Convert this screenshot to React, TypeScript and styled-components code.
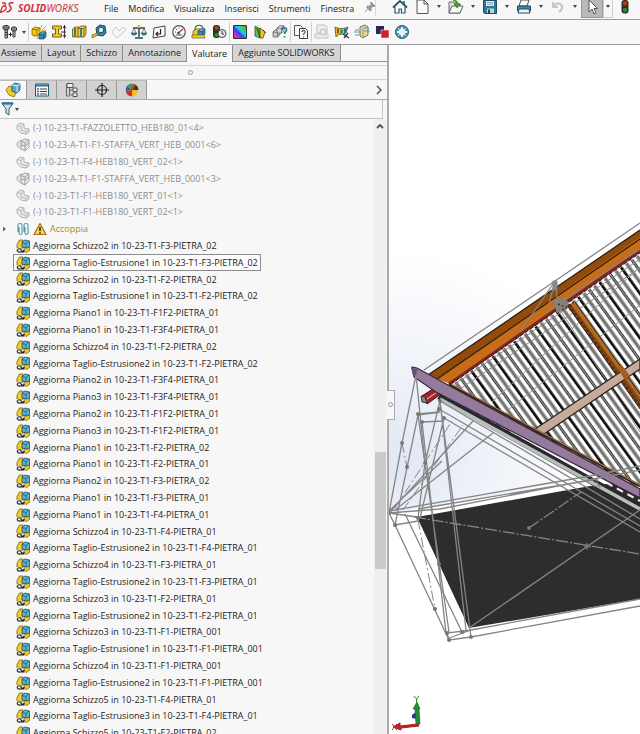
import React from 'react';
import styled, { createGlobalStyle, css } from 'styled-components';

const GlobalStyle = createGlobalStyle`
  * { box-sizing: border-box; }
  body { margin: 0; background: #fff; font-family: "Open Sans", "Noto Sans", sans-serif; color: #222; }
  button { font: inherit; color: inherit; border: 0; padding: 0; margin: 0; background: none; }
`;

const Window = styled.div`
  height: 100vh;
  display: flex;
  flex-direction: column;
  overflow: hidden;
`;

const TitleBar = styled.header`
  flex: 0 0 20px;
  display: flex;
  align-items: flex-start;
  background: #f7f7f7;
  border-bottom: 1px solid #9a9a9a;
`;

const Logo = styled.div`
  display: flex;
  align-items: center;
  width: 98px;
  height: 15px;
  font: italic 10px/14px "Noto Sans", "Open Sans", sans-serif;
  color: #d0343a;
  svg { flex: none; margin-right: 4px; }
`;

const Menu = styled.nav`
  display: flex;
  align-items: center;
  width: 278px;
  height: 16px;
  gap: 10px;
  padding-left: 6px;
  font-size: 9px;
  border-right: 1px solid #d8d8d8;
`;

const QuickAccess = styled.div`
  display: flex;
  align-items: flex-start;
  padding-left: 13px;
`;

const Tool = styled.button<{ $pressed?: boolean; $quick?: boolean }>`
  flex: none;
  display: flex;
  align-items: center;
  justify-content: center;
  width: ${p => (p.$quick ? 22 : 20)}px;
  height: ${p => (p.$quick ? 18 : 20)}px;
  padding-bottom: ${p => (p.$quick ? 4 : 0)}px;
  ${p => p.$pressed && css`background: #b9b9b9; border: 1px solid #999; border-top: 0;`}
`;

const CaretButton = styled.button<{ $boxed?: boolean }>`
  flex: none;
  display: flex;
  align-items: center;
  justify-content: center;
  width: ${p => (p.$boxed ? 10 : 12)}px;
  height: 18px;
  padding-bottom: 5px;
  ${p => p.$boxed && css`border: 1px solid #ccc; border-top: 0; margin-right: 1px;`}
`;

const Triangle = styled.span`
  border: 2px solid transparent;
  border-top: 3px solid #444;
  border-bottom: 0;
`;

const ToolBar = styled.div`
  flex: 0 0 25px;
  display: flex;
  align-items: center;
  background: #f7f7f7;
  border-bottom: 1px solid #9a9a9a;
`;

const ToolCaret = styled.button`
  width: 8px;
  height: 20px;
  display: flex;
  align-items: center;
  justify-content: center;
`;

const Divider = styled.span`
  flex: 0 0 1px;
  height: 20px;
  background: #d0d0d0;
`;

const Workspace = styled.main`
  flex: 1;
  min-height: 0;
  display: flex;
`;

const Panel = styled.section`
  position: relative;
  flex: 0 0 389px;
  display: flex;
  flex-direction: column;
  background: #f7f7f7;
  border-right: 2px solid #aaa;
`;

const CommandTabs = styled.div`
  flex: 0 0 17px;
  display: flex;
  border-bottom: 1px solid #8b9499;
`;

const CommandTab = styled.button<{ $active?: boolean }>`
  padding: 0 5px;
  font-size: 9px;
  line-height: 16px;
  white-space: nowrap;
  color: #222;
  background: #d5d5d5;
  border-right: 1px solid #8f8f8f;
  &:first-child { padding-left: 1px; }
  ${p => p.$active && css`background: #f7f7f7; margin-bottom: -1px;`}
`;

const GripBar = styled.div`
  flex: 0 0 15px;
  margin-top: 3px;
  display: flex;
  align-items: center;
  justify-content: center;
  padding-right: 6px;
  border: solid #d0d5d6;
  border-width: 1px 0;
`;

const Grip = styled.span`
  width: 5px;
  height: 5px;
  border: 1px solid #999;
  border-radius: 50%;
`;

const ManagerTabs = styled.div`
  flex: 0 0 20px;
  display: flex;
  border-bottom: 1px solid #aaa;
`;

const ManagerTab = styled.button<{ $active?: boolean }>`
  flex: 0 0 ${p => (p.$active ? 27 : 30)}px;
  display: flex;
  align-items: center;
  justify-content: center;
  background: ${p => (p.$active ? '#f7f7f7' : '#d2d2d2')};
  border-right: 1px solid #999;
  border-top: 1px solid #bbb;
`;

const MoreButton = styled.button`
  width: 16px;
  margin-left: auto;
  display: flex;
  align-items: center;
  justify-content: center;
`;

const FilterBar = styled.div`
  flex: 0 0 19px;
  display: flex;
  align-items: center;
  margin-right: 4px;
  border: solid #c4c4c4;
  border-width: 0 1px 1px 0;
`;

const FilterButton = styled.button`
  display: flex;
  align-items: center;
  gap: 1px;
  padding-left: 1px;
`;

const TreeArea = styled.div`
  flex: 1;
  min-height: 0;
  display: flex;
`;

const Tree = styled.ul`
  flex: 1;
  margin: 0;
  padding: 0;
  list-style: none;
  overflow: hidden;
`;

const TreeRow = styled.li<{ $tone?: 'muted' | 'mate' }>`
  display: flex;
  align-items: center;
  height: 17px;
  padding-left: 2px;
  font-size: 9px;
  line-height: 15px;
  white-space: nowrap;
  color: ${p => (p.$tone === 'muted' ? '#8d8d8d' : p.$tone === 'mate' ? '#94941e' : '#1c1c1c')};
  &:nth-child(5n) { height: 16px; }
`;

const Expander = styled.span`
  width: 11px;
  display: flex;
`;

const RowLabel = styled.span<{ $selected?: boolean }>`
  display: flex;
  align-items: center;
  gap: 3px;
  height: 100%;
  padding: 0 2px;
  border: 1px solid ${p => (p.$selected ? '#8c8c8c' : 'transparent')};
  background: ${p => (p.$selected ? '#fcfcfc' : 'transparent')};
`;

const ScrollBar = styled.div`
  flex: 0 0 12px;
  display: flex;
  flex-direction: column;
  align-items: center;
  background: #efefef;
  margin-right: 1px;
`;

const ScrollGap = styled.div<{ $share: number }>`
  flex: ${p => p.$share} 1 0;
`;

const Thumb = styled.div`
  flex: 117 1 0;
  width: 11px;
  background: #cbcbcb;
`;

const PanelHandle = styled.button`
  position: absolute;
  left: 100%;
  top: 50%;
  width: 8px;
  height: 30px;
  display: flex;
  align-items: center;
  justify-content: center;
  background: #f7f7f7;
  border: 1px solid #aaa;
  border-left: 0;
`;

const Viewport = styled.section`
  flex: 1;
  min-width: 0;
  svg { display: block; width: 100%; height: 100%; }
`;

/* ---------- icons ---------- */

const Svg = ({ children, w = 16, h = 16 }: { children: React.ReactNode; w?: number; h?: number }) => (
  <svg width={w} height={h} viewBox={`0 0 ${w} ${h}`} fill="none" strokeLinejoin="round" aria-hidden="true">
    {children}
  </svg>
);

const Cube = ({ x, y, s = 8, fill = '#f2c618', top = '#fbe670', line = '#3b3414' }: { x: number; y: number; s?: number; fill?: string; top?: string; line?: string }) => (
  <g stroke={line} strokeWidth=".7">
    <path d={`M${x} ${y + s * 0.3}l${s * 0.35} ${-s * 0.3}h${s * 0.65}v${s * 0.7}l${-s * 0.35} ${s * 0.3}h${-s * 0.65}z`} fill={fill} />
    <path d={`M${x} ${y + s * 0.3}l${s * 0.35} ${-s * 0.3}h${s * 0.65}l${-s * 0.35} ${s * 0.3}zM${x + s * 0.65} ${y + s * 0.3}v${s * 0.7}`} fill={top} />
  </g>
);

const IconLogo = () => (
  <Svg w={14} h={14}>
    <path d="M2 2h2.500c2 .5 1 2.500-1.500 3M0 11.500c4-.5 7-3.500 6-5.500C5.500 5 4 5 2.500 5.500L0 12" stroke="#d0343a" strokeWidth="1.300" />
    <path d="M13.500 2c-3-1-5 .3-4 2.300s2.500 2.500 1.300 4.200S7.500 11 6.500 10.500" stroke="#d0343a" strokeWidth="1.600" />
  </Svg>
);
const IconPin = () => (
  <Svg w={12} h={12}><path d="M7 1l4 4-1 .5-1-.3-2 2 .2 2-1 .8L2.500 6l.8-1 2 .2 2-2L6.500 2zM4 8l-3 3" fill="#999" stroke="#888" strokeWidth=".8" /></Svg>
);
const IconHome = () => (
  <Svg><path d="M3 8v6h4v-4h2.500v4H13V8" fill="#fff" stroke="#25566b" strokeWidth="1.200" /><path d="M1 8.500L8 2l7 6.500" stroke="#25566b" strokeWidth="1.800" /><path d="M12 2v3" stroke="#25566b" strokeWidth="1.500" /></Svg>
);
const IconNew = () => (
  <Svg><path d="M3 1h7l4 4v9.500H3z" fill="#fafafa" stroke="#555" /><path d="M10 1v4h4" stroke="#555" /></Svg>
);
const IconOpen = () => (
  <Svg><path d="M1 3h5l1 2h5v9H1z" fill="#e2e2dc" stroke="#666" /><path d="M4 7h11l-3 7H1z" fill="#f7f7f3" stroke="#666" /><path d="M5 1c3 0 5 1 5 4h2.500L9 9 6 5h2c0-2-1-3-3-4z" fill="#43a324" stroke="#2a7016" strokeWidth=".5" /></Svg>
);
const IconSave = () => (
  <Svg><path d="M1.500 1.500h13v13h-12l-1-1z" fill="#2f7897" stroke="#1c4c63" /><path d="M4 2h8v5H4z" fill="#dfe8eb" /><path d="M5 3.500h6M5 5.300h6" stroke="#76909a" strokeWidth=".7" /><path d="M5 9.500h7V14H5z" fill="#c7d5db" /><path d="M6 10.500h2V14H6z" fill="#204d60" /></Svg>
);
const IconPrint = () => (
  <Svg><path d="M5 1h8l-2 6H3z" fill="#fafafa" stroke="#555" /><path d="M1.500 7h13v5h-13z" fill="#3d88a8" stroke="#1c4c63" /><path d="M3 10h10l1 4H2z" fill="#eef3f5" stroke="#1c4c63" /></Svg>
);
const IconUndo = () => (
  <Svg><path d="M3 3v5h5M3.500 7.500C6 3 13 4 12 9c-.3 2-1.500 3-3 4" stroke="#c4c4c4" strokeWidth="2" /></Svg>
);
const IconCursor = () => (
  <Svg><path d="M5 1v12l3-3 2 5 2-1-2-4.500h3.500z" fill="#fff" stroke="#555" /></Svg>
);
const IconSignal = () => (
  <Svg><rect x="4.500" y="1" width="7" height="13.500" rx="3" fill="#27321f" /><circle cx="8" cy="4.500" r="2.200" fill="#c6301d" /><circle cx="8" cy="11" r="2.200" fill="#2d8c31" /></Svg>
);

const IconBolts = () => (
  <Svg><path d="M1 2.500l1.500-1h3l1.500 1v2L5.500 6h-3L1 4.500z" fill="#777" stroke="#333" /><path d="M3 6h2.500v8H3z" fill="#bbb" stroke="#333" strokeWidth=".9" /><path d="M3 8.500h2.500M3 11h2.500" stroke="#333" /><path d="M9.500 4l1-1h3l1 1v2l-1 1h-3l-1-1z" fill="#888" stroke="#333" /><path d="M11 7h2v6h-2z" fill="#bbb" stroke="#333" strokeWidth=".9" /><path d="M6.500 10.500h4M8.500 8.500v4" stroke="#222" /></Svg>
);
const IconInterference = () => (
  <Svg><path d="M1 5l3-2 5 1v6l-3 2-5-1z" fill="#f2c618" stroke="#6a5614" strokeWidth=".7" /><path d="M1 5l5 1v6M6 6l3-2" stroke="#6a5614" strokeWidth=".7" /><Cube x={8} y={8} s={7} fill="#2e86ad" top="#79bad3" line="#17455b" /><path d="M9 6l2-5M11 6l4-4M3 13l3-2M6 15l1-3M11 7l4-1" stroke="#e0a41d" /></Svg>
);
const IconClearance = () => (
  <Svg><path d="M1.500 2h9v3h-3v5h3v3h-9v-3h3V5h-3z" fill="#f4cc24" stroke="#5c4f14" strokeWidth=".9" /><path d="M13.500 1v13M12 4l1.500-2L15 4M12 11l1.500 2 1.500-2M10 8h5" stroke="#333" /></Svg>
);
const IconHoles = () => (
  <Svg><path d="M1.500 5L4 3h4v10H1.500z" fill="#f2c618" stroke="#6a5614" strokeWidth=".8" /><path d="M7 4l3-2h5v8l-2 3H7z" fill="#f4cf30" stroke="#6a5614" strokeWidth=".8" /><path d="M7 4.500h6L15 2M13 4.500V13" stroke="#6a5614" strokeWidth=".8" /><path d="M4 4v9M10 4v9" stroke="#2b7795" strokeWidth="1.800" /></Svg>
);
const IconMeasure = () => (
  <Svg><path d="M5 4l4-3 5 1 1 7-3 3-6-1z" fill="#3488aa" stroke="#1b4a60" /><circle cx="10" cy="6" r="2.800" fill="#d9ebf1" stroke="#1b4a60" /><path d="M7 11l-6 3V11l6-2z" fill="#f2c618" stroke="#5e5212" strokeWidth=".7" /></Svg>
);
const IconMarkup = () => (
  <Svg><path d="M2 6l3-3 3 4 4-4 3 3-9 8-4-4z" fill="#f6f6f6" stroke="#c9c9c9" /></Svg>
);
const IconScale = () => (
  <Svg><path d="M8 1v12M4 14h8M2 4h12" stroke="#29495a" strokeWidth="1.500" /><path d="M3 4L1 9M3 4l2 5M13 4l-2 5M13 4l2 5" stroke="#555" strokeWidth=".7" /><path d="M0 9h6c-1 3-5 3-6 0zM10 9h6c-1 3-5 3-6 0z" fill="#2e86ad" stroke="#1c4c63" strokeWidth=".6" /><circle cx="8" cy="2.500" r="1.500" fill="#f2c618" /></Svg>
);
const IconSection = () => (
  <Svg><path d="M3 4l11-2v10L2 14z" fill="#fafafa" stroke="#444" /><path d="M9.500 5v5H5M7 8l-2 2 2 2" stroke="#222" strokeWidth="1.200" /></Svg>
);
const IconGauge = () => (
  <Svg><circle cx="8" cy="8" r="6.300" fill="#f8f8f8" stroke="#555" strokeWidth="1.200" /><path d="M7 9l5-4" stroke="#d4352b" strokeWidth="1.500" /><path d="M4 8h1M5 5l1 1M8 3.500v1M5 11h6" stroke="#555" /><circle cx="7.500" cy="9" r="1.300" fill="#444" /></Svg>
);
const IconSensor = () => (
  <Svg><path d="M4 7V5c0-5 8-5 8 0" stroke="#555" strokeWidth="1.200" /><path d="M2 7l3-2h4v8H2z" fill="#f2c618" stroke="#6a5614" strokeWidth=".7" /><Cube x={7} y={5} s={7} fill="#3488aa" top="#8cc6dc" line="#1b4a60" /><path d="M1 11h12l1 3H1z" fill="#f4cc24" stroke="#6a5614" strokeWidth=".7" /></Svg>
);
const IconSignalClock = () => (
  <Svg><rect x="2" y="1" width="7" height="13" rx="3" fill="#27321f" /><circle cx="5.500" cy="4" r="2" fill="#d2331f" /><circle cx="5.500" cy="11" r="2" fill="#2d8c31" /><circle cx="11" cy="9.500" r="4" fill="#e9edef" stroke="#444" /><path d="M11 7v3h2" stroke="#333" /></Svg>
);
const IconGradient = () => (
  <Svg>
    <defs><linearGradient id="spectrum" x1="0" y1="1" x2="1" y2="0"><stop offset="0" stopColor="#e32b2b" /><stop offset=".2" stopColor="#d432d8" /><stop offset=".42" stopColor="#3440e6" /><stop offset=".58" stopColor="#25c9e8" /><stop offset=".76" stopColor="#2bd64a" /><stop offset="1" stopColor="#f03434" /></linearGradient></defs>
    <path d="M1.500 1.500h13v13h-13z" fill="url(#spectrum)" stroke="#333" />
  </Svg>
);
const IconDraft = () => (
  <Svg><path d="M3 2l5 3v9l-5-2z" fill="#65b548" stroke="#2a5b22" strokeWidth=".8" /><path d="M8 4l5 4-2 6H8z" fill="#f2c618" stroke="#514315" strokeWidth=".8" /><path d="M5 4l3 9M11 6l3 3" stroke="#244" /></Svg>
);
const IconSymmetry = () => (
  <Svg><Cube x={1} y={6} s={7} fill="#c6c6c6" top="#eee" line="#555" /><Cube x={5} y={2} s={7} fill="#d7d7d7" top="#f3f3f3" line="#555" /><path d="M10 6c0-3 5-3 4.500 0 0 2-2 1.500-2 4M12.500 12v1.500" stroke="#2a7694" strokeWidth="1.700" /></Svg>
);
const IconCompareDocs = () => (
  <Svg><path d="M1.500 1.500h6l2 2v8h-8z" fill="#fafafa" stroke="#555" /><path d="M6.500 4.500h6l2 2v8h-8z" fill="#fafafa" stroke="#444" /><path d="M9 8c0-2 3.500-2 3 0 0 1.500-1.500 1-1.500 3M10.500 12.500v1" stroke="#2a7694" strokeWidth="1.300" /></Svg>
);
const IconDisabledReport = () => (
  <Svg><path d="M3 1h8l2 2v6H3zM1 10h13v4H1z" fill="#ededed" stroke="#c2c2c2" /><circle cx="9" cy="8" r="3" fill="#e8e8e8" stroke="#bbb" /></Svg>
);
const IconSimulation = () => (
  <Svg><path d="M1 3c4 2 8 2 13 0l-2 6c-3 2-7 0-10 4z" fill="#e6c125" stroke="#4b3c18" strokeWidth=".7" /><path d="M3 4l2 1v4l-2 1z" fill="#d6352a" /><path d="M6 6l3-1v4l-3 1z" fill="#39a14a" /><path d="M10 5l3-1-1 5-2 1z" fill="#2c67c2" /><path d="M9 10l6 4M14 9l-4 5" stroke="#333" strokeWidth="1.300" /></Svg>
);
const IconFlow = () => (
  <Svg><path d="M6 3l5-2 3 2v8l-5 3-3-2z" fill="#e5d6a4" stroke="#5e7f58" /><path d="M1 6h4M0 8h6M1 11h4M10 4h5M10 7h6" stroke="#579bb5" /><path d="M9 4v9" stroke="#b98f3a" /></Svg>
);
const IconSquares = () => (
  <Svg><path d="M2 2h8v8H2z" fill="#27265e" /><path d="M7 6h8v8H7z" fill="#cf202c" stroke="#fff" strokeWidth=".5" /></Svg>
);
const IconTarget = () => (
  <Svg><circle cx="8" cy="8" r="6.500" fill="#3f8fb3" stroke="#245a73" /><path d="M8 2l2 4 4 2-4 2-2 4-2-4-4-2 4-2z" fill="#f4fafc" /><path d="M4 4l2 2M12 4l-2 2M4 12l2-2M12 12l-2-2" stroke="#dcecf2" /><circle cx="8" cy="8" r="1.500" fill="#dcecf2" /></Svg>
);

const IconAssembly = () => (
  <Svg><path d="M1 8l3-4 3 1v4l4 2-2 4-5-2z" fill="#f4cb23" stroke="#7a6415" strokeWidth=".8" /><path d="M7 3l3-2 5 1v6l-3 3-5-2z" fill="#56a9c8" stroke="#1f5870" strokeWidth=".8" /><path d="M7 3l5 1 3-2M12 4v6" stroke="#d6eef5" /></Svg>
);
const IconProperties = () => (
  <Svg><path d="M1.500 2h13v12h-13z" fill="#fafafa" stroke="#1f5870" /><path d="M2 2.500h12v2H2z" fill="#2e7795" /><path d="M3 7h2M3 9.500h2M3 12h2" stroke="#2b6cae" strokeWidth="1.500" /><path d="M6 7h7M6 9.500h7M6 12h7" stroke="#444" /></Svg>
);
const IconConfigurations = () => (
  <Svg><path d="M3 1.500h6v4H3zM9 6h4v3.500H9zM9 11h4v3.500H9z" fill="#eee" stroke="#555" /><path d="M5.500 6v7H9M5.500 8H9M2.500 2v12h3" stroke="#666" /></Svg>
);
const IconCrosshair = () => (
  <Svg><circle cx="8" cy="8" r="4.500" stroke="#222" strokeWidth="1.200" /><path d="M8 1v14M1 8h14" stroke="#222" strokeWidth="1.200" /></Svg>
);
const IconAppearance = () => (
  <Svg><circle cx="8" cy="8" r="6.500" fill="#e9e9e9" /><path d="M8 8L3 3.800A6.500 6.500 0 0 1 10 2z" fill="#4a9a4c" /><path d="M8 8L1.700 9A6.500 6.500 0 0 1 3 3.800z" fill="#2d62a8" /><path d="M8 8l-6.300 1A6.500 6.500 0 0 0 8 14.500z" fill="#d52e26" /><path d="M8 8v6.500A6.500 6.500 0 0 0 14.500 8z" fill="#f0c21d" /><path d="M8 8h6.500A6.500 6.500 0 0 0 10 2z" fill="#353535" /><path d="M8 8l3-5.500" stroke="#d52e26" strokeWidth="2" /></Svg>
);
const IconFunnel = () => (
  <Svg w={13}><path d="M.8 2h11.400L8 8v6l-3-2V8z" fill="#cfdfe5" stroke="#2d6479" /><path d="M1 2.500h11" stroke="#2d7590" strokeWidth="2.200" /></Svg>
);
const IconChevron = () => (<Svg w={8} h={10}><path d="M2 1l4 4-4 4" stroke="#555" strokeWidth="1.600" /></Svg>);
const IconUp = () => (<Svg w={8} h={14}><path d="M1 9l3-3 3 3" stroke="#555" strokeWidth="1.800" /></Svg>);

const IconGhostPart = () => (
  <Svg w={14} h={14}><path d="M1 4.500L4 2l4 1v4l5 1v3l-3 2-5-1-4-4z" fill="#ebebeb" stroke="#aaa" strokeWidth=".9" /><path d="M1 4.500l4 1L8 3M5 5.500V9l5 1.500L13 8M10 10.500V13" stroke="#b0b0b0" strokeWidth=".9" /></Svg>
);
const IconGhostAssembly = () => (
  <Svg w={14} h={14}><path d="M1 5l4-3 3 1v7l-3 1-4-3z" fill="#e5e5e5" stroke="#aaa" strokeWidth=".9" /><path d="M5 3l4-2 4 1v7l-4 4-4-2z" fill="#e8e8e8" stroke="#999" strokeWidth=".9" /><path d="M5 3.500l4 1.500 4-3M9 5v8M5 7l4 1 4-3" stroke="#999" strokeWidth=".9" /></Svg>
);
const IconUpdate = () => (
  <Svg w={14} h={14}>
    <path d="M1 5.500L3.500 1H7v8l-4 1-2-1z" fill="#f3ce20" stroke="#6f5c12" strokeWidth=".8" />
    <path d="M8 8h5.500v3.500l-3 2L8 12z" fill="#f0c51d" stroke="#6f5c12" strokeWidth=".7" />
    <path d="M6 3l3-2 4.500 1v6l-3 1L6 8z" fill="#62b0cf" stroke="#1f5267" strokeWidth=".8" />
    <path d="M6 3.500l4 1 3-2.500M10 4.500V9" stroke="#235b73" strokeWidth=".8" />
    <path d="M1 11.500C2 9 5 9.500 5 11s3 1.500 3.500 0M8.500 13H4.500C2.500 13.500 1.500 12.500 1 11.500" stroke="#f5f5f5" strokeWidth="2.200" />
    <path d="M1 11.500C2 9 5 9.500 5 11s3 1.500 3.500 0M8.500 13H4.500C2.500 13.500 1.500 12.500 1 11.500" stroke="#222" strokeWidth="1.200" />
  </Svg>
);
const IconMates = () => (
  <Svg w={14} h={14}><path d="M2 10V3c0-2 4-2 4 0v8c0 2-3 2-3 0V5M8 10V3c0-2 4-2 4 0v8c0 2-3 2-3 0V5" stroke="#4f9aa5" strokeWidth="1.100" /></Svg>
);
const IconWarning = () => (
  <Svg w={14} h={14}><path d="M7 1.500l6 11H1z" fill="#fbd544" stroke="#a3711d" strokeWidth="1.200" /><path d="M7 5v4M7 10.300v1.400" stroke="#222" strokeWidth="1.600" /></Svg>
);
const IconExpand = () => (<Svg w={6} h={8}><path d="M1 1.500L4 4 1 6.500z" fill="#666" /></Svg>);

/* ---------- data ---------- */

const parts = [
  { name: '(-) 10-23-T1-FAZZOLETTO_HEB180_01<4>' },
  { name: '(-) 10-23-A-T1-F1-STAFFA_VERT_HEB_0001<6>', assembly: true },
  { name: '(-) 10-23-T1-F4-HEB180_VERT_02<1>' },
  { name: '(-) 10-23-A-T1-F1-STAFFA_VERT_HEB_0001<3>', assembly: true },
  { name: '(-) 10-23-T1-F1-HEB180_VERT_01<1>' },
  { name: '(-) 10-23-T1-F1-HEB180_VERT_02<1>' },
];

const updates: [string, string][] = [
  ['Schizzo2', 'F3-PIETRA_02'], ['Taglio-Estrusione1', 'F3-PIETRA_02'],
  ['Schizzo2', 'F2-PIETRA_02'], ['Taglio-Estrusione1', 'F2-PIETRA_02'],
  ['Piano1', 'F1F2-PIETRA_01'], ['Piano1', 'F3F4-PIETRA_01'],
  ['Schizzo4', 'F2-PIETRA_02'], ['Taglio-Estrusione2', 'F2-PIETRA_02'],
  ['Piano2', 'F3F4-PIETRA_01'], ['Piano3', 'F3F4-PIETRA_01'],
  ['Piano2', 'F1F2-PIETRA_01'], ['Piano3', 'F1F2-PIETRA_01'],
  ['Piano1', 'F2-PIETRA_02'], ['Piano1', 'F2-PIETRA_01'],
  ['Piano2', 'F3-PIETRA_02'], ['Piano1', 'F3-PIETRA_01'], ['Piano1', 'F4-PIETRA_01'],
  ['Schizzo4', 'F4-PIETRA_01'], ['Taglio-Estrusione2', 'F4-PIETRA_01'],
  ['Schizzo4', 'F3-PIETRA_01'], ['Taglio-Estrusione2', 'F3-PIETRA_01'],
  ['Schizzo3', 'F2-PIETRA_01'], ['Taglio-Estrusione2', 'F2-PIETRA_01'],
  ['Schizzo3', 'F1-PIETRA_001'], ['Taglio-Estrusione1', 'F1-PIETRA_001'],
  ['Schizzo4', 'F1-PIETRA_001'], ['Taglio-Estrusione2', 'F1-PIETRA_001'],
  ['Schizzo5', 'F4-PIETRA_01'], ['Taglio-Estrusione3', 'F4-PIETRA_01'],
  ['Schizzo5', 'F2-PIETRA_02'],
];

const toolGroups: [string, React.FC][][] = [
  [['Interferenza', IconInterference], ['Distanza', IconClearance], ['Allineamento fori', IconHoles], ['Misura', IconMeasure], ['Marcatura', IconMarkup],
    ['Proprietà di massa', IconScale], ['Proprietà sezione', IconSection], ['Prestazioni', IconGauge], ['Sensore', IconSensor], ['Visualizzazione assieme', IconSignalClock]],
  [['Curvatura', IconGradient], ['Sformo', IconDraft], ['Simmetria', IconSymmetry]],
  [['Confronta documenti', IconCompareDocs]],
  [['Rapporto', IconDisabledReport], ['Simulazione', IconSimulation], ['Flusso', IconFlow], ['Confronto', IconSquares], ['Verifica', IconTarget]],
];

const quickTools: [string, React.FC][] = [['Nuovo', IconNew], ['Apri', IconOpen], ['Salva', IconSave], ['Stampa', IconPrint], ['Annulla', IconUndo]];

const managerTabs: [string, React.FC][] = [['Albero', IconAssembly], ['Proprietà', IconProperties], ['Configurazioni', IconConfigurations], ['Quote', IconCrosshair], ['Aspetti', IconAppearance]];

/* ---------- 3D view ---------- */

const joints = [[402, 443], [407, 467], [418, 414], [422, 422], [440, 401], [439, 409], [444, 418], [425, 463], [389, 513], [395, 525], [418, 518], [435, 609], [439, 564], [449, 640], [447, 633], [462, 632], [471, 637], [529, 528], [587, 546]];

const Model = () => (
  <svg viewBox="389 45 251 689" preserveAspectRatio="xMinYMin slice" role="img" aria-label="Modello 3D">
    <defs>
      <radialGradient id="sky" gradientUnits="userSpaceOnUse" cx="400" cy="460" r="210">
        <stop offset="0" stopColor="#e1e7f4" /><stop offset=".45" stopColor="#f0f3f9" /><stop offset="1" stopColor="#fff" />
      </radialGradient>
      <pattern id="slatBands" width="40" height="26" patternUnits="userSpaceOnUse" patternTransform="rotate(54.300)">
        <path d="M0 0h40v26H0z" fill="#fff" />
        <path d="M0 2.500h40M0 9h40M0 22h40" stroke="#90968f" strokeWidth="1.600" />
        <path d="M0 1.500h40M0 3.500h40M0 8h40M0 10h40M0 21h40M0 23h40" stroke="#171816" strokeWidth=".8" />
        <path d="M0 15.700h40" stroke="#0d0e0d" strokeWidth="2.800" />
      </pattern>
    </defs>
    <path d="M389 45h251v689H389z" fill="#fff" />
    <path d="M389 240h251v273H389z" fill="url(#sky)" />
    <path d="M389 513L440 505 640 470v264H389z" fill="#fff" />

    <path d="M417 517L590 486 640 480v119L469 628z" fill="#2d2d2d" />

    <path d="M450 386L640 254V498L535 434z" fill="url(#slatBands)" />
    <path d="M455 384L640 259M460 389L640 268" stroke="#858585" strokeWidth="1" />
    <path d="M640 267L492 402M640 305L508 410M560 310l80 122" stroke="#919191" strokeWidth="1" />

    <path d="M567 305l8-3 65 92v15z" fill="#804713" />
    <path d="M571 304l4-2 65 92v5z" fill="#b66b25" />
    <path d="M567 305l73 104M575 302l65 92" stroke="#352215" strokeWidth="1" />
    <path d="M569 305l71 101" stroke="#4c2c20" strokeWidth="2" strokeDasharray="3 2" />
    <path d="M532 431L640 359v10L544 434z" fill="#c6aa9b" stroke="#30221d" strokeWidth="1.300" />
    <path d="M617 368l8 12 5-4-9-12z" fill="#a0601f" />

    <path d="M428 375L640 230v8L437 379z" fill="#914b0b" />
    <path d="M437 379L640 237v15L451 384z" fill="#c76c17" />
    <path d="M428 375L640 230M437 379L640 239" stroke="#2c1909" strokeWidth="1.200" />
    <path d="M449 384L640 251" stroke="#7d2425" strokeWidth="3" />
    <path d="M451 384L640 253" stroke="#2c1919" strokeWidth="1" strokeDasharray="4 2" />

    <path d="M422 396l14-9 9 4-18 13z" fill="#a8222c" stroke="#311" />
    <path d="M427 399l13-9" stroke="#e8d5d5" strokeWidth="1" />
    <path d="M421 396l4 1 2 6-5-1z" fill="#888" stroke="#333" />
    <path d="M439 396L640 508" stroke="#28292a" strokeWidth="7" />
    <path d="M440 399L640 509" stroke="#b9bdbc" strokeWidth="3.500" />
    <path d="M448 397L640 501" stroke="#f0f0f0" strokeWidth="2" strokeDasharray="7 5" />
    <path d="M412 367l5 1 31 17L640 489v9L436 392l-22-15z" fill="#947b9b" stroke="#37263e" strokeWidth="1.200" />
    <path d="M449 384L640 486" stroke="#3a2720" strokeWidth="3" />
    <path d="M451 384L640 485" stroke="#ba8954" strokeWidth="1" />
    <path d="M411 368l6 1-1 7-3-1z" fill="#624f72" />

    <g fill="none" stroke="#858585" strokeWidth="1.300">
      <path d="M424 370L555 281 640 223M555 281l-6 23M555 281l3 25M555 281L520 332M640 249l-95 63" />
      <path d="M416 375L402 443 389 513 395 525 449 640 471 637 640 606M416 375L425 463M395 525l23-110 22-3" />
      <path d="M418 414l21-2M422 422l22-1M418 415l31 217M422 422l24 211M440 401l31 236M440 401l26 229M440 401L425 463 418 518M444 418L420 518" />
      <path d="M395 525l23-4M389 513l51-4 200-39M418 509l180-30M389 511L590 476 640 466M389 513l28 4M462 632L405 514M449 640l-2-7 24-3 169-31M449 638l22-8" />
      <path d="M440 401L640 519M439 409L640 526M444 418L640 532M389 513L473 421M395 510l98-77M389 511l53-50" />
      <path d="M469 628L640 510" />
      <path d="M414 517L640 554M529 528l52-36" strokeDasharray="12 2 2 2" />
      <path d="M402 443l5 24M418 520l17 89M403 510l60-85M395 508l57-87" strokeWidth="1" strokeDasharray="10 3 2 3" />
    </g>
    <path d="M553 300l9-2 7 4-3 8-9 3z" fill="#86817d" />
    <path d="M558 304l14 6M574 302l-13 9" stroke="#45302a" strokeWidth="1.500" strokeDasharray="2 2" />
    <path d="M553 281h4v9h-4zM596 480l4 8M593 486h9M584 546l7 1M587 543v7" fill="#888" stroke="#858585" />
    <g fill="#777">{joints.map(([x, y]) => <circle key={`${x}-${y}`} cx={x} cy={y} r="2" />)}</g>

    <path d="M418 724l-18 2v-3l-7 4 8 3v-2l18-2z" fill="#c52329" stroke="#a51c22" />
    <path d="M412 715l4-3 1 7-5-1z" fill="#2930a0" />
    <path d="M416 724l-1-15h-2l4-7 3 7h-1l1 15z" fill="#258b35" stroke="#176b25" strokeWidth=".7" />
    <path d="M414 696l2.500 3 2.500-3M416.500 699v4" stroke="#258b35" fill="none" />
    <path d="M392 724l5 6M397 724l-5 6" stroke="#c52329" />
  </svg>
);

export default function App() {
  return (
    <Window>
      <GlobalStyle />
      <TitleBar>
        <Logo><IconLogo /><strong>SOLID</strong>WORKS</Logo>
        <Menu>
          {['File', 'Modifica', 'Visualizza', 'Inserisci', 'Strumenti', 'Finestra'].map(m => <button key={m}>{m}</button>)}
          <button aria-label="Blocca menu"><IconPin /></button>
        </Menu>
        <QuickAccess>
          <Tool $quick aria-label="Home"><IconHome /></Tool>
          {quickTools.map(([label, Icon]) => (
            <React.Fragment key={label}>
              <Tool $quick aria-label={label}><Icon /></Tool>
              <CaretButton aria-label={`Opzioni ${label}`}><Triangle /></CaretButton>
            </React.Fragment>
          ))}
          <Tool $quick $pressed aria-label="Seleziona"><IconCursor /></Tool>
          <CaretButton $boxed aria-label="Opzioni selezione"><Triangle /></CaretButton>
          <Tool $quick aria-label="Ricostruisci"><IconSignal /></Tool>
        </QuickAccess>
      </TitleBar>

      <ToolBar>
        <Tool aria-label="Fissaggi"><IconBolts /></Tool>
        <ToolCaret aria-label="Opzioni fissaggi"><Triangle /></ToolCaret>
        {toolGroups.map((group, i) => (
          <React.Fragment key={i}>
            <Divider />
            {group.map(([label, Icon]) => <Tool key={label} aria-label={label}><Icon /></Tool>)}
          </React.Fragment>
        ))}
      </ToolBar>

      <Workspace>
        <Panel>
          <CommandTabs role="tablist">
            {['Assieme', 'Layout', 'Schizzo', 'Annotazione', 'Valutare', 'Aggiunte SOLIDWORKS'].map(t => (
              <CommandTab key={t} role="tab" aria-selected={t === 'Valutare'} $active={t === 'Valutare'}>{t}</CommandTab>
            ))}
          </CommandTabs>
          <GripBar><Grip /></GripBar>
          <ManagerTabs role="tablist">
            {managerTabs.map(([label, Icon], i) => (
              <ManagerTab key={label} role="tab" aria-label={label} aria-selected={i === 0} $active={i === 0}><Icon /></ManagerTab>
            ))}
            <MoreButton aria-label="Altro"><IconChevron /></MoreButton>
          </ManagerTabs>
          <FilterBar>
            <FilterButton aria-label="Filtro"><IconFunnel /><Triangle /></FilterButton>
          </FilterBar>
          <TreeArea>
            <Tree>
              {parts.map((p, i) => (
                <TreeRow key={i} $tone="muted">
                  <Expander />
                  <RowLabel>{p.assembly ? <IconGhostAssembly /> : <IconGhostPart />}{p.name}</RowLabel>
                </TreeRow>
              ))}
              <TreeRow $tone="mate">
                <Expander><IconExpand /></Expander>
                <RowLabel><IconMates /><IconWarning />Accoppia</RowLabel>
              </TreeRow>
              {updates.map(([feature, part], i) => (
                <TreeRow key={i}>
                  <Expander />
                  <RowLabel $selected={i === 1}><IconUpdate />{`Aggiorna ${feature} in 10-23-T1-${part}`}</RowLabel>
                </TreeRow>
              ))}
            </Tree>
            <ScrollBar>
              <IconUp />
              <ScrollGap $share={319} />
              <Thumb />
              <ScrollGap $share={165} />
            </ScrollBar>
          </TreeArea>
          <PanelHandle aria-label="Comprimi pannello"><Grip /></PanelHandle>
        </Panel>
        <Viewport><Model /></Viewport>
      </Workspace>
    </Window>
  );
}
